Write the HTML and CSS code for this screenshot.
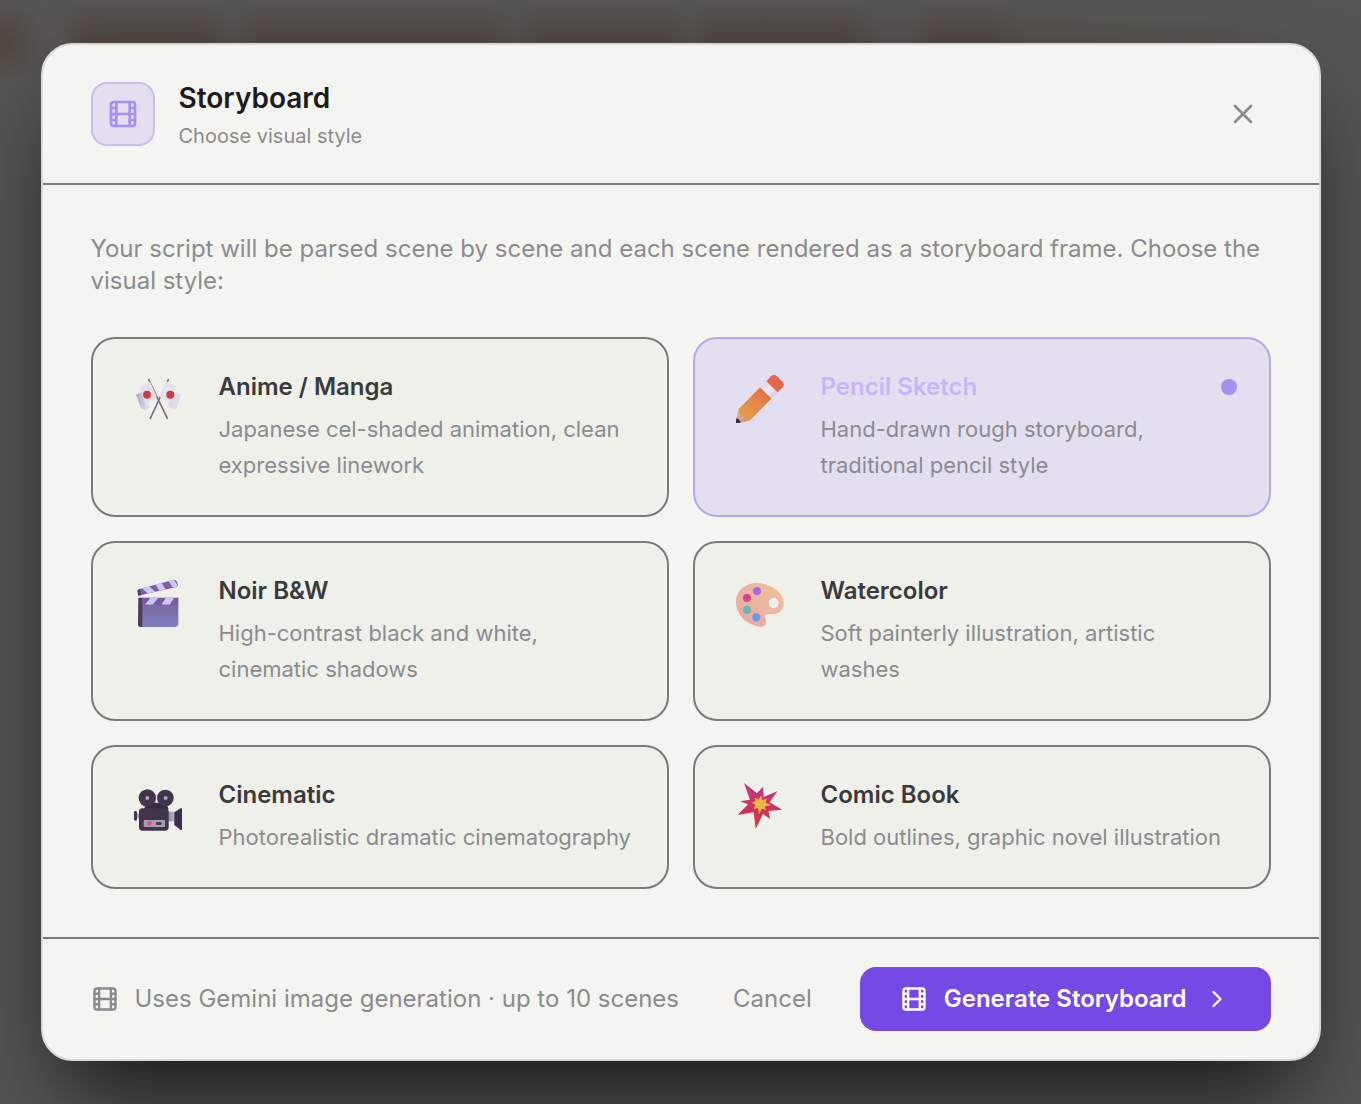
FILE: index.html
```
<!DOCTYPE html>
<html lang="en">
<head>
	<meta charset="UTF-8">
	<meta name="viewport" content="width=device-width, initial-scale=1">
	<title>Storyboard</title>
	<link rel="stylesheet" href="styles.css">
</head>
<body>
	<!-- film icon, used three times -->
	<svg class="sprite" aria-hidden="true">
		<symbol id="film" viewBox="0 0 24 24">
			<rect x="3" y="3" width="18" height="18" rx="2"/>
			<path d="M7 3v18M17 3v18M3 12h18M3 7.5h4M3 16.5h4M17 7.5h4M17 16.5h4"/>
		</symbol>
	</svg>

	<div class="overlay">
		<div class="modal" role="dialog" aria-modal="true" aria-labelledby="modal-title">
			<header class="modal-header">
				<span class="badge"><svg class="icon icon-lg" aria-hidden="true"><use href="#film"/></svg></span>
				<div class="heading">
					<h1 id="modal-title">Storyboard</h1>
					<p>Choose visual style</p>
				</div>
				<button type="button" class="close" aria-label="Close">
					<svg class="icon icon-lg" viewBox="0 0 24 24" aria-hidden="true"><path d="M18 6 6 18M6 6l12 12"/></svg>
				</button>
			</header>

			<div class="modal-body">
				<p class="intro">Your script will be parsed scene by scene and each scene rendered as a storyboard frame. Choose the visual style:</p>

				<div class="styles">
					<button type="button" class="card" aria-pressed="false">
						<span class="emoji">
							<svg viewBox="42 48 144 144" aria-hidden="true">
								<defs>
									<linearGradient id="flag" x1="0" x2="1"><stop offset="0" stop-color="#aca2bb"/><stop offset=".5" stop-color="#cfc6dd"/><stop offset="1" stop-color="#e6dff0"/></linearGradient>
								</defs>
								<path d="M86 62l56 116M145 62L91 178" stroke="#77747f" stroke-width="5" stroke-linecap="round"/>
								<path d="M48 107l16-8 22 38 3 9-14 7-12-5z" fill="url(#flag)"/>
								<path d="M184 107l-16-8-24 32 2 13 18 9 7-8z" fill="#e2daea"/>
								<path d="M60 84l30-16 20 43-6 8-19 10-1 15-7-7z" fill="#e5ddef"/>
								<path d="M138 67l31 14-12 33-7 17-10-4-18-11-4-6z" fill="#e8e0f2"/>
								<circle cx="81" cy="107" r="12" fill="#c93e44"/>
								<circle cx="151" cy="107" r="12" fill="#c93e44"/>
							</svg>
						</span>
						<span class="card-text">
							<span class="card-title">Anime / Manga</span>
							<span class="card-desc">Japanese cel-shaded animation, clean expressive linework</span>
						</span>
					</button>

					<button type="button" class="card selected" aria-pressed="true">
						<span class="emoji">
							<svg viewBox="48 48 144 144" aria-hidden="true">
								<defs>
									<linearGradient id="wood" x1="0" y1="1" x2="1" y2="0"><stop offset="0" stop-color="#e8a04c"/><stop offset=".5" stop-color="#e38a49"/><stop offset="1" stop-color="#db6c44"/></linearGradient>
									<linearGradient id="tip" x1="0" y1="0" x2="1" y2="1"><stop offset="0" stop-color="#e8b98e"/><stop offset="1" stop-color="#b98e98"/></linearGradient>
									<linearGradient id="ferrule" x1="0" y1="0" x2="1" y2="1"><stop offset="0" stop-color="#d3cbdc"/><stop offset=".5" stop-color="#f0eaf8"/><stop offset="1" stop-color="#cabddb"/></linearGradient>
								</defs>
								<path d="M56 148l33 37-27 6H49l-1-10z" fill="url(#tip)"/>
								<path d="M49 178l7 3 6 8-2 3H48v-8z" fill="#3c2943"/>
								<path d="M120 85l35 33-66 67-16-1-3-13-12-6-2-15z" fill="url(#wood)"/>
								<path d="M120 85l19-18 34 33-18 18z" fill="url(#ferrule)"/>
								<path d="M139 67l14-15q9-7 17-1l18 17q7 8 1 16l-16 16z" fill="#e4674d"/>
							</svg>
						</span>
						<span class="card-text">
							<span class="card-title">Pencil Sketch <i class="dot"></i></span>
							<span class="card-desc">Hand-drawn rough storyboard, traditional pencil style</span>
						</span>
					</button>

					<button type="button" class="card" aria-pressed="false">
						<span class="emoji">
							<svg viewBox="42 42 144 144" aria-hidden="true">
								<defs>
									<linearGradient id="slate" x1="0" y1="0" x2="0" y2="1"><stop offset="0" stop-color="#75639a"/><stop offset="1" stop-color="#817dc4"/></linearGradient>
									<clipPath id="clap-top"><path d="M60 72l98-27q10-2 13 6l3 10-5 5-106 24z"/></clipPath>
									<clipPath id="clap-bar"><path d="M65 98h110v21H65z"/></clipPath>
								</defs>
								<path d="M55 98h14v88h-9q-6-1-6-7z" fill="#4b3d58"/>
								<path d="M67 98h108v80q-1 8-8 8H67z" fill="url(#slate)"/>
								<g clip-path="url(#clap-bar)">
									<path d="M65 98h110v21H65z" fill="#7b5aa4"/>
									<path d="M91 98h24l-17 21H75zM138 98h24l-13 21h-25z" fill="#ccc8f5"/>
								</g>
								<path d="M52 79q0-7 12-8l4 18-13 4z" fill="#51405e"/>
								<g clip-path="url(#clap-top)">
									<path d="M50 40h130v60H50z" fill="#7e5ba3"/>
									<path d="M65 69l20-7 22 19-22 6zM106 58l18-6 14 23-19 5zM145 47l16-4 13 20-15 5z" fill="#ccc8f5"/>
								</g>
							</svg>
						</span>
						<span class="card-text">
							<span class="card-title">Noir B&amp;W</span>
							<span class="card-desc">High-contrast black and white, cinematic shadows</span>
						</span>
					</button>

					<button type="button" class="card" aria-pressed="false">
						<span class="emoji">
							<svg viewBox="48 42 144 144" aria-hidden="true">
								<defs>
									<linearGradient id="palette" x1="1" y1="0" x2="0" y2="1"><stop offset="0" stop-color="#efc29e"/><stop offset=".4" stop-color="#eeb6a0"/><stop offset="1" stop-color="#e8a7a3"/></linearGradient>
								</defs>
								<path fill-rule="evenodd" d="M111 54c36 0 80 24 80 61 0 20-15 33-34 33h-17c-7 3-5 9-2 17 3 12-4 21-17 20-38-4-73-34-73-75 0-34 29-56 63-56zM161 98a15 16 0 1 0 0 32 15 16 0 0 0 0-32z" fill="url(#palette)"/>
								<circle cx="111" cy="78" r="12" fill="#a668e5"/>
								<circle cx="81" cy="99" r="12" fill="#d44589"/>
								<circle cx="81" cy="134" r="12" fill="#64b9b4"/>
								<circle cx="109" cy="157" r="12" fill="#6798ef"/>
							</svg>
						</span>
						<span class="card-text">
							<span class="card-title">Watercolor</span>
							<span class="card-desc">Soft painterly illustration, artistic washes</span>
						</span>
					</button>

					<button type="button" class="card" aria-pressed="false">
						<span class="emoji">
							<svg viewBox="42 39 144 144" aria-hidden="true">
								<defs>
									<linearGradient id="lens" x1="0" x2="1"><stop offset="0" stop-color="#8e879b"/><stop offset="1" stop-color="#c4bdd0"/></linearGradient>
								</defs>
								<path d="M50 130h10v15H50z" fill="#aaa2b5"/>
								<rect x="42" y="123" width="9" height="29" rx="4" fill="#44364e"/>
								<path d="M80 98h58l8 20H72z" fill="#352b41"/>
								<path d="M144 125h22v29h-22z" fill="url(#lens)"/>
								<path d="M163 127l20-13q3 0 3 4v60q-1 4-4 2l-19-15z" fill="#3e2d52"/>
								<rect x="57" y="115" width="89" height="67" rx="10" fill="#40364c"/>
								<circle cx="82" cy="84" r="26" fill="#40374d"/>
								<circle cx="136" cy="84" r="25" fill="#40374d"/>
								<circle cx="82" cy="84" r="6" fill="#aaa5b7"/>
								<circle cx="137" cy="84" r="6" fill="#aaa5b7"/>
								<rect x="71" y="150" width="64" height="21" rx="2" fill="#a79fb4"/>
								<circle cx="88" cy="160" r="7" fill="#f14b79"/>
								<rect x="108" y="156" width="17" height="9" rx="3" fill="#463a54"/>
							</svg>
						</span>
						<span class="card-text">
							<span class="card-title">Cinematic</span>
							<span class="card-desc">Photorealistic dramatic cinematography</span>
						</span>
					</button>

					<button type="button" class="card" aria-pressed="false">
						<span class="emoji">
							<svg viewBox="48 39 144 144" aria-hidden="true">
								<defs>
									<linearGradient id="boom" x1="0" y1="0" x2="0" y2="1"><stop offset="0" stop-color="#c23590"/><stop offset=".6" stop-color="#cc3358"/><stop offset="1" stop-color="#d63e3f"/></linearGradient>
								</defs>
								<path d="M72 39l39 31 18-20 2 31 42-18-24 34 38 22-41 4 4 24-21-15-22 45-6-50-48 8 31-32-24-9 30-5z" fill="url(#boom)"/>
								<path d="M124 76l3 14 13-4-3 12 17 8-19 3 2 11-12-4-7 17-5-19-11 3 4-13-11-6 12-5-3-9 12 4z" fill="#efb443"/>
							</svg>
						</span>
						<span class="card-text">
							<span class="card-title">Comic Book</span>
							<span class="card-desc">Bold outlines, graphic novel illustration</span>
						</span>
					</button>
				</div>
			</div>

			<footer class="modal-footer">
				<p class="note"><svg class="icon" aria-hidden="true"><use href="#film"/></svg>Uses Gemini image generation · up to 10 scenes</p>
				<div class="actions">
					<button type="button" class="cancel">Cancel</button>
					<button type="button" class="generate">
						<svg class="icon" aria-hidden="true"><use href="#film"/></svg>
						Generate Storyboard
						<svg class="icon" viewBox="0 0 24 24" aria-hidden="true"><path d="m9 18 6-6-6-6"/></svg>
					</button>
				</div>
			</footer>
		</div>
	</div>
</body>
</html>
```
FILE: styles.css
```
*{box-sizing:border-box;}
body{margin:0;background:#555552;color:#8b8b8f;font:24px/32px Inter,"Liberation Sans",sans-serif;}
h1,p{margin:0;}
button{margin:0;padding:0;border:none;background:none;color:inherit;font:inherit;text-align:left;cursor:pointer;}
.sprite{position:absolute;width:0;height:0;}
.icon{flex:none;width:28px;height:28px;fill:none;stroke:currentColor;stroke-width:2;stroke-linecap:round;stroke-linejoin:round;}
.icon-lg{width:32px;height:32px;}

/* blurred page behind the dialog */
.overlay{display:flex;align-items:center;justify-content:center;min-height:100vh;padding:40px;background:
	linear-gradient(#555552,rgba(85,85,82,0) 44px),
	linear-gradient(transparent 44px,#555552 80px),
	linear-gradient(90deg,#4f463f 10px,#555350 40px,#555350 60px,#4c443d 90px,#4c443d 200px,#53504c 232px,#4e4640 265px,#4e4640 480px,#53504c 515px,#4e4640 545px,#4e4640 665px,#53504c 690px,#4c443d 715px,#4c443d 840px,#53514d 880px,#53514d 910px,#4f4740 935px,#4f4740 990px,#53514b 1030px,#555552);}

.modal{width:100%;max-width:1280px;border:2px solid #dad9d5;border-radius:32px;background:#f4f5f0;box-shadow:0 50px 100px -24px rgba(0,0,0,.8);}

.modal-header{display:flex;align-items:center;gap:24px;padding:32px 48px;border-bottom:2px solid #7a7a7a;}
.badge{display:flex;align-items:center;justify-content:center;width:64px;height:64px;border:2px solid #cbbcf0;border-radius:16px;background:#e3dfee;color:#a48ff2;}
.heading{flex:1;display:grid;gap:2px;}
.heading h1{color:#1c1c1e;font-size:28px;line-height:42px;font-weight:600;}
.heading p{font-size:20px;line-height:30px;}
.close{display:flex;padding:12px;}

.modal-body{padding:48px;}
.intro{margin-bottom:40px;}
.styles{display:grid;grid-template-columns:1fr 1fr;gap:24px;}
.card{display:flex;align-items:flex-start;gap:28px;padding:32px;border:2px solid #7a7a7a;border-radius:24px;background:#eff0ea;}
.emoji{flex:none;display:flex;justify-content:center;width:66px;padding-top:4px;}
.emoji svg{width:48px;height:48px;}
.card-text{flex:1;display:grid;gap:8px;}
.card-title{display:flex;align-items:center;justify-content:space-between;color:#3a3a3c;font-weight:600;}
.card-desc{font-size:22px;line-height:36px;}
.selected{border-color:#b9a6f2;background:#e3dfee;}
.selected .card-title{color:#c4b5fd;}
.dot{width:16px;height:16px;border-radius:50%;background:#a48ff2;}

.modal-footer{display:flex;align-items:center;justify-content:space-between;gap:16px;padding:28px 48px;border-top:2px solid #7a7a7a;}
.note{display:flex;align-items:center;gap:16px;}
.actions{display:flex;align-items:center;gap:48px;}
.generate{display:flex;align-items:center;gap:16px;padding:16px 40px;border-radius:16px;background:#7549e3;color:#fff;font-weight:600;}
```
